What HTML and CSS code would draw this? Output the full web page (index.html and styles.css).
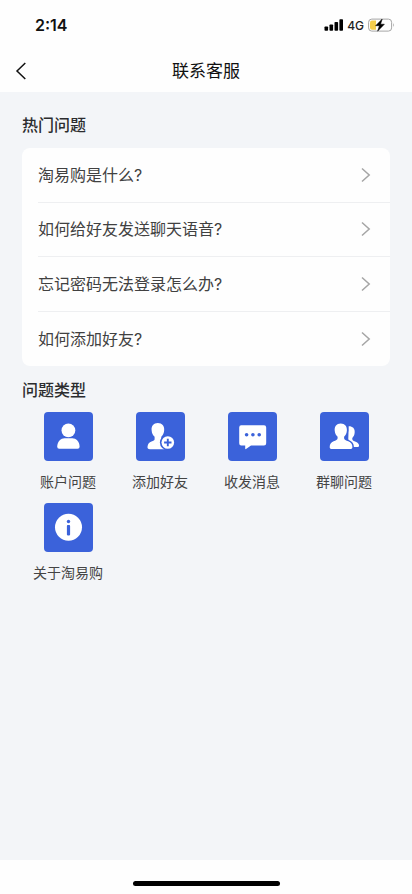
FILE: index.html
```html
<!DOCTYPE html>
<html lang="zh-CN">
<head>
<meta charset="utf-8">
<meta name="viewport" content="width=device-width, initial-scale=1">
<title>联系客服</title>
<link rel="stylesheet" href="styles.css">
</head>
<body>
<div class="status">
  <span class="time">2:14</span>
  <div class="indicators">
    <svg class="signal" width="20" height="12" viewBox="0 0 20 12"><rect x="0.5" y="7.5" width="3.6" height="4.2" rx="0.8"/><rect x="5.5" y="5.5" width="3.6" height="6.2" rx="0.8"/><rect x="10.5" y="3" width="3.6" height="8.7" rx="0.8"/><rect x="15.4" y="0.3" width="3.6" height="11.4" rx="0.8"/></svg>
    <span class="network">4G</span>
    <svg class="battery" width="28" height="14" viewBox="0 0 28 14"><rect x="0.6" y="1.1" width="23" height="12" rx="3.2" fill="#fff" stroke="#a5a5a5"/><path d="M4 2.5H8V11.7H4Q2 11.7 2 9.7V4.5Q2 2.5 4 2.5Z" fill="#f5ce4b"/><path d="M25.2 5Q27 7 25.2 9Z" fill="#a5a5a5"/><path d="M14.2 1L7.6 7.7H11.4L9.6 13.2L16.4 6.2H12.6Z" fill="#000" stroke="#000" stroke-width="0.5"/></svg>
  </div>
</div>
<header class="nav">
  <svg class="back" width="12" height="18" viewBox="0 0 12 18"><path d="M10.3 1L2 9L10.3 17"/></svg>
  <h1>联系客服</h1>
</header>
<main>
  <h2>热门问题</h2>
  <ul class="card">
    <li><span>淘易购是什么?</span><svg class="chevron" width="10" height="16" viewBox="0 0 10 16"><path d="M1 1.5L8.2 8L1 14.5"/></svg></li>
    <li><span>如何给好友发送聊天语音?</span><svg class="chevron" width="10" height="16" viewBox="0 0 10 16"><path d="M1 1.5L8.2 8L1 14.5"/></svg></li>
    <li><span>忘记密码无法登录怎么办?</span><svg class="chevron" width="10" height="16" viewBox="0 0 10 16"><path d="M1 1.5L8.2 8L1 14.5"/></svg></li>
    <li><span>如何添加好友?</span><svg class="chevron" width="10" height="16" viewBox="0 0 10 16"><path d="M1 1.5L8.2 8L1 14.5"/></svg></li>
  </ul>
  <h2 class="types-title">问题类型</h2>
  <div class="types">
    <div class="type">
      <svg class="tile" viewBox="0 0 49 49"><circle cx="24.4" cy="18.4" r="6.9"/><path d="M13.2 34.8C13.2 29.3 17 26.2 20.5 26.2H28.3C32 26.2 35.6 29.3 35.6 34.8Q35.6 36.7 33.6 36.7H15.2Q13.2 36.7 13.2 34.8Z"/></svg>
      <span>账户问题</span>
    </div>
    <div class="type">
      <svg class="tile" viewBox="0 0 49 49"><path d="M21.8 11C26.1 11 28.5 13.9 28.2 18C28 21.1 26.9 23.1 25.3 24.8V27.2C25.3 28.4 27.2 29 28.6 29.5V37.2H14C12 37.2 11.3 36.4 11.5 34.8C11.8 31.5 13.3 30.3 15.5 29.5C17.4 28.8 18.6 28.4 18.6 27.2V24.8C16.8 23.1 15.8 21.1 15.6 18C15.3 13.9 17.6 11 21.8 11Z"/><circle class="mark" cx="31.8" cy="30.5" r="7.9"/><circle cx="31.8" cy="30.5" r="6.3"/><path class="line" d="M31.8 26.8V34.2M28.1 30.5H35.5"/></svg>
      <span>添加好友</span>
    </div>
    <div class="type">
      <svg class="tile" viewBox="0 0 49 49"><path d="M13.2 13.2H36Q38.2 13.2 38.2 15.4V31.2Q38.2 33.4 36 33.4H23L18 37.1Q17.2 37.5 17.2 36.5V33.4H13.2Q11.2 33.4 11.2 31.2V15.4Q11.2 13.2 13.2 13.2Z"/><g class="mark"><circle cx="18.6" cy="22.8" r="1.8"/><circle cx="24.9" cy="22.8" r="1.8"/><circle cx="31.2" cy="22.8" r="1.8"/></g></svg>
      <span>收发消息</span>
    </div>
    <div class="type">
      <svg class="tile" viewBox="0 0 49 49"><path d="M28.7 14.3C32.5 14.2 35 16.5 34.7 20.2C34.5 23 33.6 24.5 32.3 25.9V27.2C32.3 28.5 34 29 35.7 29.8C38 30.8 39 32.1 39.1 33.7Q39.1 35.1 37.5 35.1H28Z"/><path class="body" d="M20.7 11.5C25 11.5 27.2 14.4 26.9 18.4C26.7 21.4 25.6 23.2 24.1 24.7V26.3C24.1 27.8 26.1 28.5 28.3 29.3C31 30.4 32.4 32 32.4 35C32.4 36.5 31.7 37.1 30.1 37.1H12C10.4 37.1 9.7 36.5 9.7 35C9.7 32 11 30.4 13.6 29.3C15.8 28.5 17.6 27.8 17.6 26.3V24.7C16 23.2 14.9 21.4 14.7 18.4C14.4 14.4 16.5 11.5 20.7 11.5Z"/></svg>
      <span>群聊问题</span>
    </div>
    <div class="type">
      <svg class="tile" viewBox="0 0 49 49"><circle cx="24.5" cy="24.3" r="13.5"/><g class="mark"><circle cx="24.5" cy="18.5" r="1.7"/><rect x="22.9" y="22.1" width="3.2" height="10.3" rx="0.8"/></g></svg>
      <span>关于淘易购</span>
    </div>
  </div>
</main>
<footer><div class="home"></div></footer>
</body>
</html>
```
FILE: styles.css
```css
* { box-sizing: border-box; margin: 0; padding: 0; }

body {
  width: 412px;
  height: 894px;
  display: flex;
  flex-direction: column;
  overflow: hidden;
  background: #fefefe;
  color: #333;
  font-family: Inter, "Noto Sans CJK SC", sans-serif;
}

svg { display: block; flex: none; }

.status {
  height: 50px;
  padding: 0 16px 0 35px;
  display: flex;
  align-items: center;
  justify-content: space-between;
}
.time { font-size: 16px; font-weight: 600; color: #111; }
.indicators { display: flex; align-items: center; }
.network { margin: 0 4px 0 3px; font-size: 12px; font-weight: 500; color: #222; }

.nav {
  height: 42px;
  padding: 0 15px;
  display: grid;
  grid-template-columns: 12px 1fr 12px;
  align-items: center;
}
.nav h1 {
  font-size: 17px;
  line-height: 24px;
  font-weight: 400;
  color: #111;
  text-align: center;
}
.back path { fill: none; stroke: #111; stroke-width: 1.5; }

main { height: 768px; padding: 21px 22px 0; background: #f3f5f8; }
h2 { font-size: 16px; line-height: 24px; font-weight: 500; color: #2b2c2e; }

.card {
  height: 218px;
  margin-top: 11px;
  display: grid;
  grid-template-rows: repeat(4, 1fr);
  list-style: none;
  background: #fefefe;
  border-radius: 8px;
}
.card li {
  margin-left: 16px;
  padding-right: 19px;
  display: flex;
  align-items: center;
  justify-content: space-between;
  font-size: 16px;
  line-height: 24px;
  color: #414141;
}
.card li:not(:last-child) { border-bottom: 1px solid #eeeff1; }
.chevron path { fill: none; stroke: #a5a5a5; stroke-width: 1.5; }

.types-title { margin-top: 12px; }
.types {
  margin-top: 10px;
  display: grid;
  grid-template-columns: repeat(4, 1fr);
  grid-auto-rows: 91px;
}
.type { display: flex; flex-direction: column; align-items: center; gap: 10px; }
.type span { font-size: 14px; line-height: 22px; color: #444; }
.tile { width: 49px; height: 49px; border-radius: 4px; background: #3b62da; fill: #fff; }
.mark { fill: #3b62da; }
.line { fill: none; stroke: #3b62da; stroke-width: 1.9; }
.body { stroke: #3b62da; stroke-width: 3; paint-order: stroke; }

footer { flex: 1; padding-top: 21px; }
.home { width: 147px; height: 5px; margin: 0 auto; border-radius: 3px; background: #000; }
```
